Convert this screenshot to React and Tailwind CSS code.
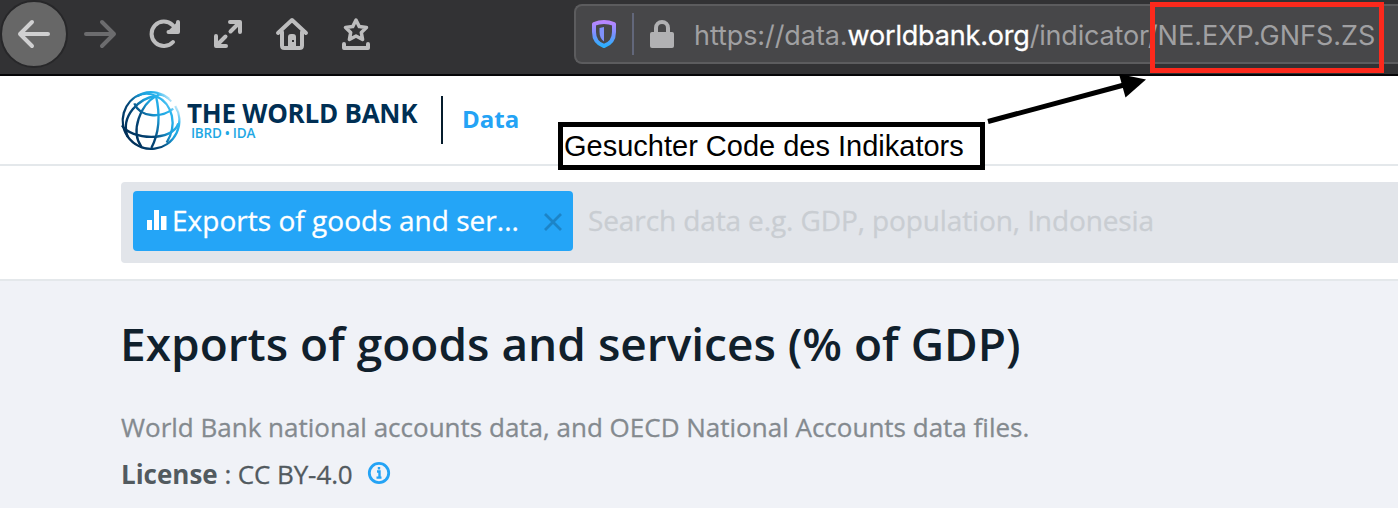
import React from "react";

function Globe() {
  return (
    <svg width="80" height="70" viewBox="0 0 240 210" fill="none" className="shrink-0">
      <defs>
        <linearGradient id="globe" gradientUnits="userSpaceOnUse" x1="60" y1="160" x2="195" y2="60">
          <stop offset="0" stopColor="#00305a" />
          <stop offset="0.35" stopColor="#04487a" />
          <stop offset="0.62" stopColor="#1a9fdb" />
          <stop offset="0.85" stopColor="#2bb5ee" />
          <stop offset="1" stopColor="#c5e9fa" />
        </linearGradient>
      </defs>
      <g stroke="url(#globe)" strokeWidth="7">
        <path d="M177 44A85 85 0 1 0 196 66" />
        <path d="M138 36C88 42 30 96 53 158" />
        <path d="M138 36C92 62 60 140 94 188" />
        <path d="M138 36C150 88 148 146 124 192" />
        <path d="M138 36C190 60 202 124 170 176" />
        <path d="M138 36C120 27 98 28 82 36M138 36C150 28 168 36 184 52" strokeWidth="6" />
        <path d="M73 58C90 100 152 104 190 74" />
        <path d="M36 124C62 168 188 174 205 118" />
      </g>
    </svg>
  );
}

function Toolbar() {
  return (
    <div className="flex h-[76px] items-start border-b-2 border-[#050507] bg-[#323234]">
      <div className="flex h-[68px] w-[68px] shrink-0 items-center justify-center rounded-full border-2 border-[#272729] bg-[#676767]">
        <svg width="34" height="30" viewBox="0 0 34 30" fill="none" stroke="#d0d0d1" strokeWidth="4" strokeLinecap="round" strokeLinejoin="round">
          <path d="M31 15H3M15 3L3 15L15 27" />
        </svg>
      </div>
      <svg width="319" height="70" viewBox="68 0 319 70" fill="none" stroke="#bdbdbe" strokeWidth="4" strokeLinecap="round" strokeLinejoin="round" className="shrink-0">
        <path d="M86 34H114M102 22L114 34L102 46" stroke="#6c6c6e" />
        <path d="M173 42A12.3 12.3 0 1 1 172.500 25L176 29" />
        <path d="M178 22V32H168.500" />
        <path d="M170 31L177 24V31Z" fill="#bdbdbe" strokeWidth="2.500" />
        <path d="M230 22H240V32M239 23L230.500 31.500M216 36V46H226M217 45L225.500 36.500" />
        <path d="M278 33L292 20L306 33M282 32V45.500Q282 48 284.500 48H299.500Q302 48 302 45.500V32" />
        <path d="M288 47V37Q288 34 291 34H293Q296 34 296 37V47Z" fill="#bdbdbe" stroke="none" />
        <rect x="292" y="40" width="2" height="2" fill="#323234" stroke="none" />
        <path d="M356 20L359.300 26.600L366.500 27.500L361.300 32.400L362.600 39.500L356 36L349.400 39.500L350.700 32.400L345.500 27.500L352.700 26.600Z" strokeWidth="3.500" />
        <path d="M344 44V48H368V44" />
      </svg>
      <div className="mt-1 ml-[187px] flex h-[60px] flex-1 items-center rounded-l-lg border-2 border-r-0 border-[#5c5c5e] bg-[#474749]">
        <svg width="26" height="30" viewBox="0 0 26 30" fill="none" className="ml-[15px] shrink-0">
          <defs>
            <linearGradient id="shield" x1="0" y1="0" x2="0" y2="1">
              <stop offset="0" stopColor="#b886ff" />
              <stop offset="0.5" stopColor="#7a90ff" />
              <stop offset="1" stopColor="#2caefc" />
            </linearGradient>
          </defs>
          <path d="M13 3C9.500 3 6 3.800 3 5V13C3 20 7 25 13 27C19 25 23 20 23 13V5C20 3.800 16.500 3 13 3Z" stroke="url(#shield)" strokeWidth="4" strokeLinejoin="round" />
          <path d="M13 8L8.500 9V13C8.500 17 10 20.500 13 22.500Z" fill="#7f90fb" />
        </svg>
        <div className="ml-[15px] h-[42px] w-0.5 bg-[#62677a]" />
        <svg width="24" height="28" viewBox="0 0 24 28" className="ml-4 shrink-0">
          <path d="M6 13V8A6 6 0 0 1 18 8V13" fill="none" stroke="#b1b1b3" strokeWidth="4" />
          <rect y="12" width="24" height="16" rx="2" fill="#b1b1b3" />
        </svg>
        <div className="ml-5 flex pt-1 font-['Inter',sans-serif] text-[27px] leading-[40px] whitespace-pre text-[#a0a0a2]">
          <span className="tracking-[-0.08px]">https://data.</span>
          <span className="tracking-[-0.18px] text-white [-webkit-text-stroke:0.3px_#fff]">worldbank.org</span>
          <span className="tracking-[-0.18px]">/indicator/</span>
          <span>NE.EXP.GNFS.ZS</span>
        </div>
      </div>
    </div>
  );
}

function Header() {
  return (
    <header className="flex h-[90px] items-start border-b-2 border-[#e4e8eb] bg-white pl-[110px]">
      <div className="mt-2 flex w-[80px] shrink-0">
        <Globe />
      </div>
      <div className="-ml-[3px] flex w-[254px] flex-col items-start pt-[26px] font-['Open_Sans',sans-serif] whitespace-nowrap">
        <span className="text-[26px] leading-[22px] font-bold tracking-[-0.25px] text-[#002f54]">THE WORLD BANK</span>
        <span className="ml-1 mt-[1px] text-[13.500px] leading-[16px] font-semibold tracking-[-0.25px] text-[#1fa8e4]">IBRD • IDA</span>
      </div>
      <div className="mt-5 h-12 w-0.5 bg-[#051c2c]" />
      <span className="mt-[27px] ml-[19px] font-['Open_Sans',sans-serif] text-[24px] leading-[32px] font-bold text-[#24a3f5]">Data</span>
    </header>
  );
}

function Search() {
  return (
    <section className="flex h-[115px] border-b-2 border-[#e4e8eb] bg-white pt-4 pl-[121px]">
      <div className="flex h-[81px] flex-1 items-start rounded-l bg-[#e2e5ea] pt-[9px] pl-3 font-['Open_Sans',sans-serif] text-[28px] leading-[58px] whitespace-nowrap">
        <div className="flex h-[60px] w-[440px] shrink-0 rounded bg-[#24a5f7] text-white">
          <svg width="20" height="20" viewBox="0 0 20 20" fill="#fff" className="mt-[19px] ml-3.5 shrink-0">
            <path d="M0 10H5V20H0ZM7 0H12V20H7ZM14 6H19.500V20H14Z" />
          </svg>
          <span className="ml-[5px] w-[370px] shrink-0 tracking-[0.03px] [-webkit-text-stroke:0.3px_#fff]">Exports of goods and ser...</span>
          <svg width="18" height="18" viewBox="0 0 18 18" fill="none" stroke="#1c84c7" strokeWidth="2.800" className="mt-[22px] ml-[2px] shrink-0">
            <path d="M1 1L17 17M17 1L1 17" />
          </svg>
        </div>
        <span className="ml-[15px] tracking-[-0.11px] text-[#c9cdd2] [-webkit-text-stroke:0.3px_#c9cdd2]">Search data e.g. GDP, population, Indonesia</span>
      </div>
    </section>
  );
}

export default function App() {
  return (
    <div className="relative flex h-[508px] w-[1398px] flex-col overflow-hidden bg-[#f0f2f7]">
      <Toolbar />
      <Header />
      <Search />
      <main className="flex flex-1 flex-col items-start pt-[30px] pl-[121px] font-['Open_Sans',sans-serif] whitespace-nowrap">
        <h1 className="-ml-[1px] text-[46px] leading-[64px] font-semibold text-[#10202c]">Exports of goods and services (% of GDP)</h1>
        <p className="mt-[32px] text-[26px] leading-[40px] text-[#848a8f] [-webkit-text-stroke:0.3px_#848a8f]">World Bank national accounts data, and OECD National Accounts data files.</p>
        <p className="mt-[7px] flex items-center text-[26px] leading-[40px] text-[#525a5f]">
          <b>License</b>
          <span className="whitespace-pre tracking-[-0.1px] [-webkit-text-stroke:0.3px_#525a5f]"> : CC BY-4.0</span>
          <svg width="24" height="24" viewBox="0 0 24 24" fill="none" className="mb-[3px] ml-[14px]">
            <circle cx="12" cy="12" r="9.700" stroke="#24a3f5" strokeWidth="2.800" />
            <path d="M10 10.500H12.500V16.500M9.500 16.600H14.500M10.800 7.300H13.200" stroke="#24a3f5" strokeWidth="2.400" />
          </svg>
        </p>
      </main>
      <div className="absolute top-[122px] left-[558px] h-[48px] w-[427px] border-[5px] border-black bg-white pl-[1px] font-['Liberation_Sans',sans-serif] text-[29px] leading-[38px] whitespace-nowrap text-black">Gesuchter Code des Indikators</div>
      <div className="absolute top-[2px] left-[1150px] h-[71px] w-[234px] border-[5px] border-[#fc291c]" />
      <svg width="170" height="55" viewBox="980 70 170 55" className="absolute top-[70px] left-[980px]">
        <path d="M988 121.500L1124 85" stroke="#000" strokeWidth="5" />
        <path d="M1119 74L1146 79.500L1125.500 97.500Z" />
      </svg>
    </div>
  );
}
